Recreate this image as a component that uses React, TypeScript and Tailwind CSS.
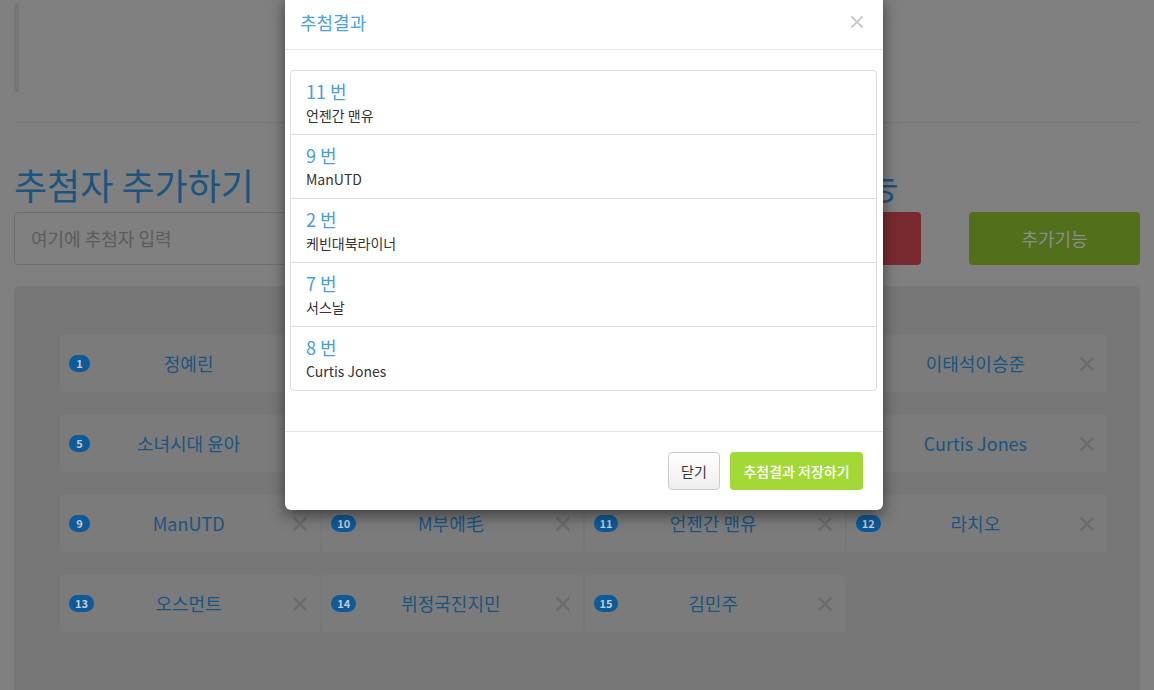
const entries = [
  { no: 1, name: '정예린' },
  { no: 2, name: '케빈대북라이너' },
  { no: 3, name: '박지성' },
  { no: 4, name: '이태석이승준' },
  { no: 5, name: '소녀시대 윤아' },
  { no: 6, name: '손흥민' },
  { no: 7, name: '서스날' },
  { no: 8, name: 'Curtis Jones' },
  { no: 9, name: 'ManUTD' },
  { no: 10, name: 'M부에毛' },
  { no: 11, name: '언젠간 맨유' },
  { no: 12, name: '라치오' },
  { no: 13, name: '오스먼트' },
  { no: 14, name: '뷔정국진지민' },
  { no: 15, name: '김민주' },
];

const results = [
  { no: 11, name: '언젠간 맨유' },
  { no: 9, name: 'ManUTD' },
  { no: 2, name: '케빈대북라이너' },
  { no: 7, name: '서스날' },
  { no: 8, name: 'Curtis Jones' },
];

// thin "times" glyph like bootstrap's close / glyphicon-remove
function Times({ className }: { className?: string }) {
  return (
    <svg viewBox="0 0 16 16" className={className} fill="none" stroke="currentColor" strokeWidth={2}>
      <path d="M1.5 1.5L14.5 14.5M14.5 1.5L1.5 14.5" />
    </svg>
  );
}

function EntryCard({ no, name }: { no: number; name: string }) {
  return (
    <div className="h-[57px] bg-[#7b7b7b] rounded-[3px] grid grid-cols-[1fr_auto_1fr] items-center pl-[9px] pr-[12px]">
      <span className="justify-self-start h-[17px] min-w-[21px] px-[6px] rounded-full bg-[#0e5a98] text-[#c3ccd6] text-[11px] font-bold leading-[17px] text-center">
        {no}
      </span>
      <span className="text-[18px] text-[#1c5480] whitespace-nowrap">{name}</span>
      <Times className="justify-self-end w-[16px] h-[16px] text-[#6a6a6a]" />
    </div>
  );
}

function ResultModal() {
  return (
    <div className="absolute left-[285px] top-[-6px] w-[598px] bg-white rounded-[6px] shadow-[0_5px_15px_rgba(0,0,0,0.5)]">
      <div className="flex items-center justify-between pl-[15px] pr-[19px] h-[56px] border-b border-[#e5e5e5]">
        <h4 className="text-[18px] leading-[26px] text-[#4aa3df]">추첨결과</h4>
        <Times className="w-[14px] h-[14px] text-[#c6c6c6]" />
      </div>

      <div className="pt-[20px] pb-[40px] pl-[5px] pr-[6px]">
        <div className="border border-[#dddddd] rounded-[4px] divide-y divide-[#dddddd]">
          {results.map((r) => (
            <div key={r.no} className="px-[15px] pt-[10px] pb-[9px]">
              <div className="text-[18px] leading-[20px] text-[#45a0e0]">{r.no} 번</div>
              <div className="mt-[4px] text-[14px] leading-[20px] text-[#333333]">{r.name}</div>
            </div>
          ))}
        </div>
      </div>

      <div className="border-t border-[#e5e5e5] pt-[20px] pb-[20px] pr-[20px] flex justify-end gap-[10px]">
        <button className="h-[38px] w-[52px] rounded-[4px] border border-[#cccccc] bg-gradient-to-b from-white to-[#eeeeee] text-[14px] text-[#333333]">
          닫기
        </button>
        <button className="h-[38px] w-[133px] rounded-[4px] bg-[#a3d937] text-[14px] font-medium text-white">
          추첨결과 저장하기
        </button>
      </div>
    </div>
  );
}

export default function App() {
  return (
    <div
      className="relative h-[690px] overflow-hidden bg-[#808080]"
      style={{ fontFamily: '"Noto Sans CJK KR", "Noto Sans", sans-serif' }}
    >
      <div className="px-[14px] pt-[3px]">
        <div className="h-[89px] border-l-[5px] border-[#777777]" />
        <div className="mt-[30px] border-t border-[#777777]" />

        <div className="mt-[41px] flex gap-[48px]">
          <div className="flex-1 flex flex-col gap-[8px]">
            <h1 className="text-[36px] leading-[40px] text-[#1c5480]">추첨자 추가하기</h1>
            <div className="h-[53px] rounded-[4px] border border-[#6e6e6e] flex items-center px-[16px]">
              <span className="text-[18px] text-[#5c5c5c]">여기에 추첨자 입력</span>
            </div>
          </div>
          <div className="w-[391px] flex flex-col gap-[8px]">
            <h1 className="pl-[9px] text-[36px] leading-[40px] text-[#1c5480]">추첨 기능</h1>
            <div className="flex gap-[48px]">
              <button className="w-[172px] h-[53px] rounded-[4px] bg-[#782a30] text-[18px] text-[#8c8c8c]">
                추첨하기
              </button>
              <button className="w-[171px] h-[53px] rounded-[4px] bg-[#52701c] text-[18px] text-[#8c8c8c]">
                추가기능
              </button>
            </div>
          </div>
        </div>

        <div className="mt-[21px] h-[500px] rounded-[6px] bg-[#777777] pt-[49px] pl-[46px] pr-[33px]">
          <div className="grid grid-cols-4 gap-x-[2px] gap-y-[23px]">
            {entries.map((e) => (
              <EntryCard key={e.no} no={e.no} name={e.name} />
            ))}
          </div>
        </div>
      </div>

      <ResultModal />
    </div>
  );
}
